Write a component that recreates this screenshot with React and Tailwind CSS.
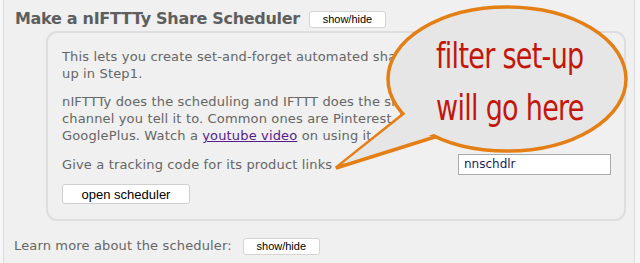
export default function App() {
  return (
    <div className="relative w-[640px] h-[263px] overflow-hidden bg-[#f6f6f6] font-['DejaVu_Sans',Verdana,sans-serif]">
      <div className="ml-[3px] w-[632px] h-full border-x border-[#dcdcdc] bg-[#eff0ef]">
        <div className="flex items-center pl-[11px] pt-[9px] h-[29px]">
          <h1 className="text-[16px] font-bold text-[#5e5e5e] tracking-[-0.3px]">Make a nIFTTTy Share Scheduler</h1>
          <button className="ml-[9px] h-[17px] w-[77px] bg-white border border-[#d4d4d4] rounded-[3px] text-[11px] leading-none text-black font-['Liberation_Sans',Arial,sans-serif]">
            show/hide
          </button>
        </div>

        <div className="ml-[42px] mt-[2px] w-[580px] h-[190px] rounded-[11px] border-2 border-[#dedede] pl-[14px] pt-[15px] text-[13px] tracking-[0.15px] leading-[17px] text-[#666]">
          <p>This lets you create set-and-forget automated sharing of the products you set</p>
          <p>up in Step1.</p>
          <p className="mt-[11px]">nIFTTTy does the scheduling and IFTTT does the sharing to whatever</p>
          <p>channel you tell it to. Common ones are Pinterest, Twitter, Facebook and</p>
          <p>
            GooglePlus. Watch a <a className="text-[#551a8b] underline">youtube video</a> on using it.
          </p>
          <div className="mt-[10px] flex items-center justify-between pr-[13px]">
            <span>Give a tracking code for its product links</span>
            <div className="w-[153px] h-[21px] bg-white border border-[#a9a9a9] pl-[5px] text-[12px] tracking-normal leading-[19px] text-[#1c1c5a]">
              nnschdlr
            </div>
          </div>
          <button className="mt-[9px] h-[20px] w-[128px] bg-white border border-[#cfcfcf] rounded-[3px] text-[13px] tracking-normal leading-none text-black font-['Liberation_Sans',Arial,sans-serif]">
            open scheduler
          </button>
        </div>

        <div className="flex items-center pl-[10px] mt-[16px] h-[18px]">
          <span className="text-[13px] tracking-[0.15px] text-[#666]">Learn more about the scheduler:</span>
          <button className="ml-[11px] h-[17px] w-[77px] bg-white border border-[#d4d4d4] rounded-[3px] text-[11px] leading-none text-black font-['Liberation_Sans',Arial,sans-serif]">
            show/hide
          </button>
        </div>
      </div>

      {/* speech bubble overlay */}
      <svg className="absolute left-0 top-0" width="640" height="263" viewBox="0 0 640 263">
        <path d="M 406 112 L 336 168 L 438 136" fill="#e6e6e6" stroke="#e47f16" strokeWidth="3.5" strokeLinejoin="miter" />
        <ellipse cx="507" cy="79" rx="119" ry="72" fill="#e6e6e6" stroke="#e47f16" strokeWidth="3.5" />
        <path d="M 409 111 L 342 164 L 437 133 Z" fill="#e6e6e6" />
      </svg>
      <div className="absolute left-[436px] top-[30px] text-[#c4170c] text-[30px] leading-[44px] font-['DejaVu_Sans_Condensed',sans-serif] tracking-[-0.7px] scale-y-[1.18] origin-top-left">
        <div>filter set-up</div>
        <div>will go here</div>
      </div>
    </div>
  );
}
